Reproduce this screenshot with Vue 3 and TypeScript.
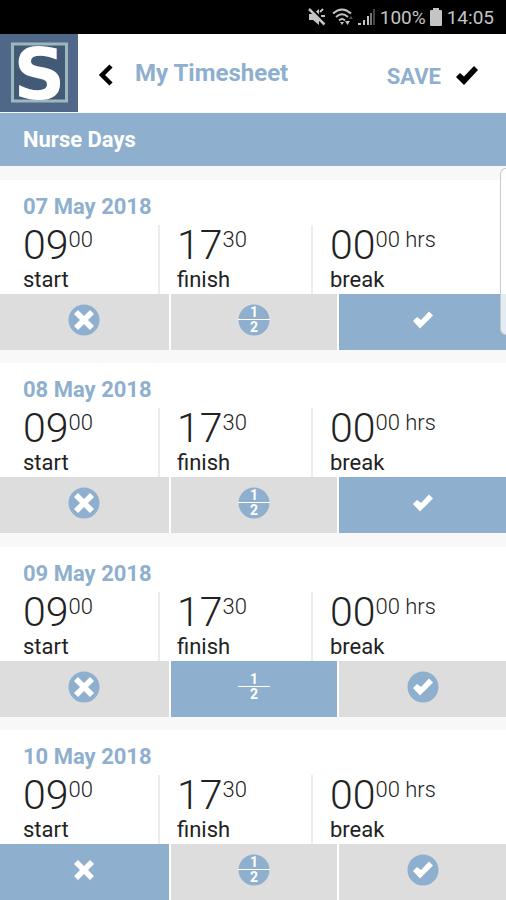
<script setup lang="ts">
import { ref } from 'vue'

type Choice = 'off' | 'half' | 'full'

interface Slot {
  hours: string
  minutes: string
  unit?: string
  label: string
}

interface Day {
  date: string
  slots: Slot[]
  choice: Choice
}

const choices: { id: Choice; label: string }[] = [
  { id: 'off', label: 'Not worked' },
  { id: 'half', label: 'Half day' },
  { id: 'full', label: 'Full day' },
]

const makeDay = (date: string, choice: Choice): Day => ({
  date,
  choice,
  slots: [
    { hours: '09', minutes: '00', label: 'start' },
    { hours: '17', minutes: '30', label: 'finish' },
    { hours: '00', minutes: '00', unit: 'hrs', label: 'break' },
  ],
})

const days = ref<Day[]>([
  makeDay('07 May 2018', 'full'),
  makeDay('08 May 2018', 'full'),
  makeDay('09 May 2018', 'half'),
  makeDay('10 May 2018', 'off'),
])
</script>

<template>
  <div class="screen">
    <div class="status">
      <svg class="mute" viewBox="0 0 18 18" aria-hidden="true">
        <path d="M1 6h4l6-5v16l-6-5H1z" fill="#c4c4c4" />
        <path d="M12 4l3-3M13 8h4" stroke="#c4c4c4" stroke-width="2" />
        <path d="M3 0l15 15" stroke="#000" stroke-width="2" />
        <path d="M1 1l15.500 15.500" stroke="#c4c4c4" stroke-width="2.500" />
      </svg>
      <svg class="wifi" viewBox="0 0 22 18" aria-hidden="true">
        <g fill="none" stroke="#c4c4c4" stroke-width="2">
          <path d="M1 5.500Q10 -2.500 19 5.500" />
          <path d="M4 9Q10 3.500 16 9" />
          <path d="M7 12.500Q10 9.500 13 12.500" />
        </g>
        <path d="M8 14h4l-2 3z" fill="#c4c4c4" />
        <path d="M13 13h5l-2.500 4z" fill="#c4c4c4" />
        <path d="M17 11h4l-2-3z" fill="#555" />
      </svg>
      <svg class="signal" viewBox="0 0 18 18" aria-hidden="true">
        <path d="M0 15h3v2H0zM5 12h2v5H5zM9 8h2v9H9z" fill="#c4c4c4" />
        <path d="M12 5h2v12h-2z" fill="#777" />
        <path d="M15 1h2v16h-2z" fill="#444" />
      </svg>
      <span>100%</span>
      <svg class="battery" viewBox="0 0 12 18" aria-hidden="true">
        <path d="M3 0h6v2h2q1 0 1 1v14q0 1-1 1H1q-1 0-1-1V3q0-1 1-1h2z" fill="#c4c4c4" />
      </svg>
      <span>14:05</span>
    </div>

    <header class="header">
      <svg class="logo" viewBox="0 0 78 78" role="img" aria-label="S">
        <rect width="78" height="78" fill="#50678a" />
        <rect x="12.500" y="10" width="54" height="57" fill="#435a77" stroke="#9bb8bd" stroke-width="3" />
        <text class="logo-letter" x="39.500" y="65" text-anchor="middle">S</text>
      </svg>
      <button class="back" type="button" aria-label="Back">
        <svg viewBox="0 0 16 22" aria-hidden="true">
          <path d="M13 2L4 11l9 9" fill="none" stroke="#000" stroke-width="4.500" />
        </svg>
      </button>
      <h1 class="title">My Timesheet</h1>
      <button class="save" type="button">
        SAVE
        <svg viewBox="0 0 22 20" aria-hidden="true">
          <path d="M0 11l4-4 4 3.500L18 0l4 4L8 19z" fill="#000" />
        </svg>
      </button>
    </header>

    <h2 class="band">Nurse Days</h2>

    <main class="days">
      <section v-for="day in days" :key="day.date" class="day">
        <h3 class="date">{{ day.date }}</h3>
        <div class="slots">
          <div v-for="slot in day.slots" :key="slot.label" class="slot">
            <div class="time">
              <span class="hours">{{ slot.hours }}</span>
              <span class="minutes">{{ slot.minutes }}<template v-if="slot.unit">&nbsp;{{ slot.unit }}</template></span>
            </div>
            <div class="label">{{ slot.label }}</div>
          </div>
        </div>
        <div class="choices" role="group" :aria-label="day.date">
          <button
            v-for="choice in choices"
            :key="choice.id"
            type="button"
            class="choice"
            :class="{ active: day.choice === choice.id }"
            :aria-label="choice.label"
            :aria-pressed="day.choice === choice.id"
            @click="day.choice = choice.id"
          >
            <svg viewBox="0 0 32 32" aria-hidden="true">
              <circle v-if="day.choice !== choice.id" cx="16" cy="16" r="15.500" fill="#8eafcd" />
              <path
                v-if="choice.id === 'off'"
                d="M10 6l6 6 6-6 4 4-6 6 6 6-4 4-6-6-6 6-4-4 6-6-6-6z"
                fill="#fff"
              />
              <g v-else-if="choice.id === 'half'">
                <path d="M0 15.500h32" stroke="#fff" stroke-width="1" />
                <text class="digit" x="16" y="13" text-anchor="middle">1</text>
                <text class="digit" x="16" y="28" text-anchor="middle">2</text>
              </g>
              <path v-else d="M6 17l4-4 4 3L22 7.500l4 4L13 24.500z" fill="#fff" />
            </svg>
          </button>
        </div>
      </section>
    </main>

    <div class="scroll-thumb"></div>
  </div>
</template>

<style>
body {
  margin: 0;
  background: #f8f8f8;
}
</style>

<style scoped>
.screen {
  position: relative;
  display: flex;
  flex-direction: column;
  min-height: 100vh;
  font-family: Roboto, "Liberation Sans", sans-serif;
  color: #222;
}

button {
  margin: 0;
  padding: 0;
  border: 0;
  background: none;
  font: inherit;
  cursor: pointer;
}

svg {
  display: block;
}

h1,
h2,
h3 {
  margin: 0;
  font-size: 22px;
  font-weight: 700;
}

.status {
  display: flex;
  align-items: center;
  justify-content: flex-end;
  height: 34px;
  padding-right: 12px;
  background: #000;
  color: #c4c4c4;
  font-size: 19px;
}

.mute {
  width: 18px;
  height: 18px;
  margin-right: 6px;
}

.wifi {
  width: 22px;
  height: 18px;
  margin-right: 4px;
}

.signal {
  width: 18px;
  height: 18px;
  margin-right: 4px;
}

.battery {
  width: 12px;
  height: 18px;
  margin: 0 5px 0 4px;
}

.header {
  display: flex;
  align-items: center;
  height: 78px;
  background: #fff;
  color: #8eafcd;
}

.logo {
  width: 78px;
  height: 78px;
  overflow: visible;
}

.logo-letter {
  font-family: "DejaVu Sans", sans-serif;
  font-size: 72px;
  font-weight: 700;
  fill: #fff;
}

.back {
  margin: 4px 21px 0 20px;
}

.back svg {
  width: 16px;
  height: 22px;
}

.title {
  flex: 1;
  font-size: 24px;
}

.save {
  display: flex;
  align-items: center;
  gap: 15px;
  padding: 6px 28px 0 0;
  color: #8eafcd;
  font-size: 22px;
  font-weight: 700;
}

.save svg {
  width: 22px;
  height: 20px;
}

.band {
  margin-top: 1px;
  padding: 0 23px;
  background: #8eafcd;
  color: #fff;
  line-height: 53px;
}

.days {
  display: grid;
  flex: 1;
  align-content: space-between;
  gap: 13px;
  padding-top: 14px;
}

.day {
  background: #fff;
}

.date {
  padding: 13px 23px 4px;
  color: #8eafcd;
  line-height: 28px;
}

.slots {
  display: grid;
  grid-template-columns: 160fr 153fr 193fr;
}

.slot {
  height: 69px;
  padding-left: 17px;
  border-right: 2px solid #ececec;
  box-sizing: border-box;
}

.slot:first-child {
  padding-left: 23px;
}

.slot:last-child {
  border-right: 0;
}

.time {
  display: flex;
  align-items: flex-start;
  height: 42px;
}

.hours {
  font-size: 41px;
  font-weight: 300;
  line-height: 40px;
}

.minutes {
  font-size: 22px;
  font-weight: 300;
  line-height: 30px;
}

.label {
  font-size: 22px;
  line-height: 26px;
}

.choices {
  display: grid;
  grid-template-columns: repeat(3, 1fr);
}

.choice {
  display: flex;
  align-items: center;
  justify-content: center;
  height: 56px;
  padding-bottom: 4px;
  border-left: 2px solid #fff;
  background: #dddddd;
}

.choice:first-child {
  border-left: 0;
}

.choice.active {
  background: #8eafcd;
}

.choice svg {
  width: 32px;
  height: 32px;
}

.digit {
  font-size: 14px;
  font-weight: 700;
  fill: #fff;
}

.scroll-thumb {
  position: absolute;
  top: 168px;
  right: 0;
  width: 6px;
  height: 167px;
  box-sizing: border-box;
  border: 1px solid #c8c8c8;
  border-right: 0;
  border-radius: 6px 0 0 6px;
  background: rgba(255, 255, 255, 0.75);
}
</style>
